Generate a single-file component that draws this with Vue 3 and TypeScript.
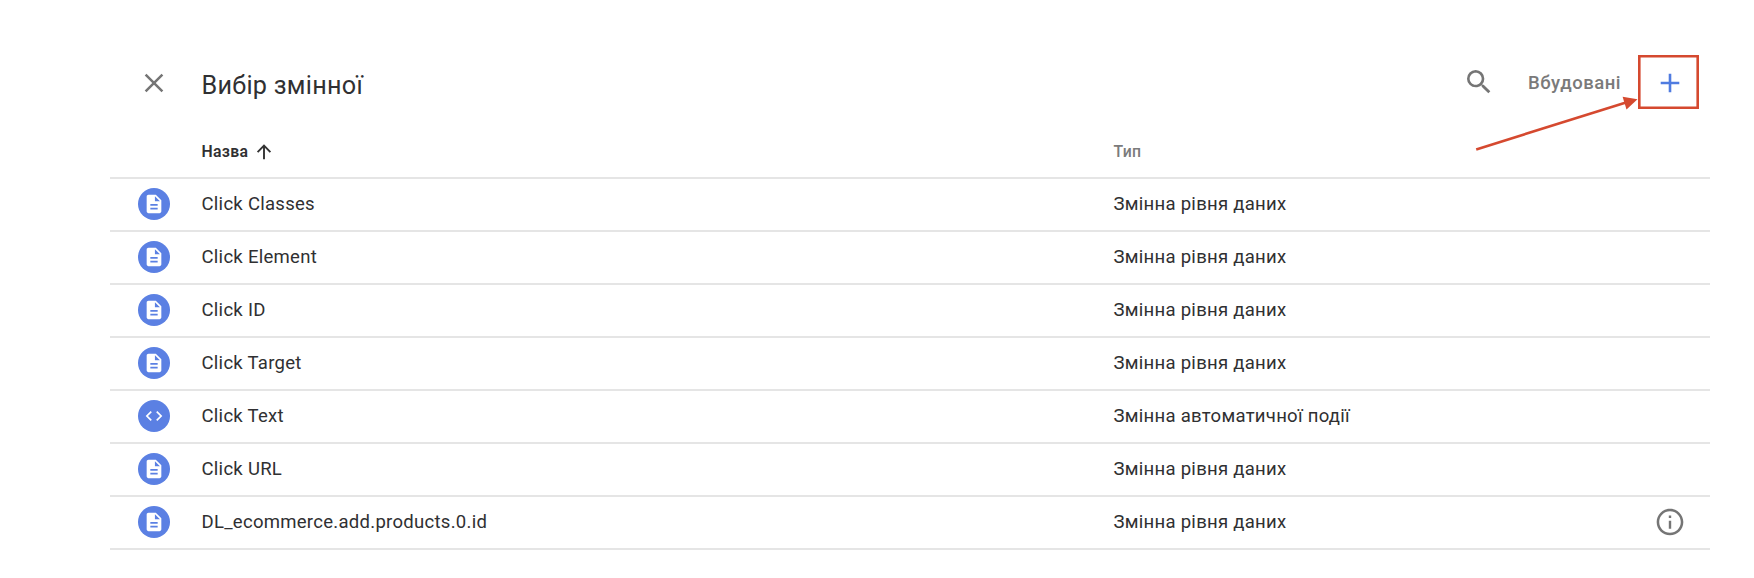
<script setup lang="ts">
interface VariableRow {
  name: string
  type: string
  icon: 'doc' | 'code'
  info?: boolean
}

const layer = 'Змінна рівня даних'
const rows: VariableRow[] = [
  { name: 'Click Classes', type: layer, icon: 'doc' },
  { name: 'Click Element', type: layer, icon: 'doc' },
  { name: 'Click ID', type: layer, icon: 'doc' },
  { name: 'Click Target', type: layer, icon: 'doc' },
  { name: 'Click Text', type: 'Змінна автоматичної події', icon: 'code' },
  { name: 'Click URL', type: layer, icon: 'doc' },
  { name: 'DL_ecommerce.add.products.0.id', type: layer, icon: 'doc', info: true },
]
</script>

<template>
  <main class="sheet">
    <header class="bar">
      <button class="close" aria-label="Закрити">
        <svg width="20" height="20" viewBox="0 0 20 20"><path d="M1.6 1.6 18.4 18.4M18.4 1.6 1.6 18.4" /></svg>
      </button>
      <h1 class="title">Вибір змінної</h1>
      <svg class="search" width="32" height="32" viewBox="0 0 24 24">
        <path d="M15.5 14h-.79l-.28-.27A6.47 6.47 0 0 0 16 9.5 6.5 6.5 0 1 0 9.5 16c1.61 0 3.09-.59 4.23-1.57l.27.28v.79l5 4.99L20.49 19l-4.99-5zm-6 0C7.01 14 5 11.99 5 9.5S7.01 5 9.5 5 14 7.01 14 9.5 11.99 14 9.5 14z" />
      </svg>
      <span class="builtin">Вбудовані</span>
      <button class="add" aria-label="Додати">
        <svg width="20" height="20" viewBox="0 0 20 20"><path d="M10 .7v18.6M.7 10h18.6" /></svg>
      </button>
    </header>

    <div class="head">
      <span class="head-name">Назва
        <svg width="16" height="16" viewBox="0 0 16 16"><path d="M8 15.3V1.8M1.6 8.1 8 1.7l6.4 6.4" /></svg>
      </span>
      <span class="head-type">Тип</span>
    </div>

    <div v-for="row in rows" :key="row.name" class="row">
      <span class="badge">
        <svg v-if="row.icon === 'doc'" width="22" height="22" viewBox="0 0 24 24">
          <path d="M14 2H6c-1.1 0-2 .9-2 2v16c0 1.1.9 2 2 2h12c1.1 0 2-.9 2-2V8l-6-6zm2 16H8v-2h8v2zm0-4H8v-2h8v2zm-3-5V3.5L18.500 9H13z" />
        </svg>
        <svg v-else width="20" height="20" viewBox="0 0 24 24">
          <path d="M9.400 16.600 4.800 12l4.600-4.600L8 6l-6 6 6 6 1.400-1.400zm5.200 0 4.600-4.600-4.600-4.600L16 6l6 6-6 6-1.400-1.400z" />
        </svg>
      </span>
      <span class="name">{{ row.name }}</span>
      <span class="type">{{ row.type }}</span>
      <svg v-if="row.info" class="info" width="32" height="32" viewBox="0 0 24 24">
        <path d="M11.100 17h1.800v-6h-1.800v6zM12 2C6.480 2 2 6.480 2 12s4.480 10 10 10 10-4.480 10-10S17.520 2 12 2zm0 18.100c-4.470 0-8.100-3.630-8.100-8.100S7.530 3.900 12 3.900s8.100 3.630 8.100 8.100-3.630 8.100-8.100 8.100zM11.100 9h1.800V7.200h-1.800V9z" />
      </svg>
    </div>

    <svg class="arrow" width="170" height="60" viewBox="0 0 170 60">
      <path class="shaft" d="M4.200 53.400 154 6.600" />
      <path class="tip" d="M165.500 3.200 150.600 .8 154.500 13.400z" />
    </svg>
  </main>
</template>

<style>
body {
  margin: 0;
  background: #fff;
}
</style>

<style scoped>
.sheet {
  position: relative;
  box-sizing: border-box;
  width: 1754px;
  height: 578px;
  padding: 55px 44px 0 110px;
  overflow: hidden;
  background: #fff;
  color: #303032;
  font-family: Roboto, "Liberation Sans", sans-serif;
}
button {
  display: flex;
  align-items: center;
  justify-content: center;
  padding: 0;
  border: 0;
  background: none;
}
.bar {
  display: flex;
  align-items: center;
  height: 54px;
  padding-right: 11px;
}
.close {
  width: 32px;
  height: 32px;
  margin-left: 27.700px;
  padding-top: 2px;
}
.close path {
  stroke: #757575;
  stroke-width: 2.5;
}
.title {
  flex: 1;
  margin: 8px 0 0 31.800px;
  font-size: 25.200px;
  font-weight: 400;
  line-height: 32px;
  letter-spacing: 0.270px;
}
.search {
  fill: #757575;
}
.builtin {
  width: 110px;
  margin: 1px 0 0 33px;
  color: #7a7a7a;
  font-size: 18.550px;
  font-weight: 500;
  letter-spacing: 0.500px;
  white-space: nowrap;
}
.add {
  box-sizing: border-box;
  width: 61px;
  height: 54px;
  padding: 1px 0 0 3px;
  border: 2.700px solid #d5492f;
  box-shadow: inset 0 0 0 0.600px #d5492f;
}
.add path {
  stroke: #4f7be0;
  stroke-width: 2.600;
}
.head {
  display: grid;
  grid-template-columns: 91.500px 912px 1fr;
  align-items: center;
  height: 67.600px;
  border-bottom: 2px solid #e5e5e5;
  font-size: 15.800px;
  letter-spacing: 0.3px;
}
.head-name {
  display: flex;
  grid-column: 2;
  gap: 7.500px;
  align-items: center;
  padding-top: 17.500px;
  font-weight: 600;
}
.head-name path {
  fill: none;
  stroke: #333;
  stroke-width: 1.900;
}
.head-type {
  padding-top: 17.500px;
  color: #7b7b7b;
  font-weight: 500;
}
.row {
  display: grid;
  grid-template-columns: 91.500px 912px 1fr 32px;
  align-items: center;
  box-sizing: border-box;
  height: 53.050px;
  padding-right: 24px;
  border-bottom: 2px solid #e5e5e5;
  font-size: 18.550px;
  line-height: 24px;
  letter-spacing: 0.270px;
}
.badge {
  display: flex;
  align-items: center;
  justify-content: center;
  width: 32px;
  height: 32px;
  margin-left: 27.600px;
  border-radius: 50%;
  background: #5b80e3;
}
.badge svg {
  fill: #fff;
}
.name,
.type {
  margin-top: -0.500px;
}
.info {
  fill: #757575;
}
.arrow {
  position: absolute;
  top: 96px;
  left: 1472px;
}
.shaft {
  stroke: #d5492f;
  stroke-width: 2.600;
}
.tip {
  fill: #d5492f;
}
</style>
